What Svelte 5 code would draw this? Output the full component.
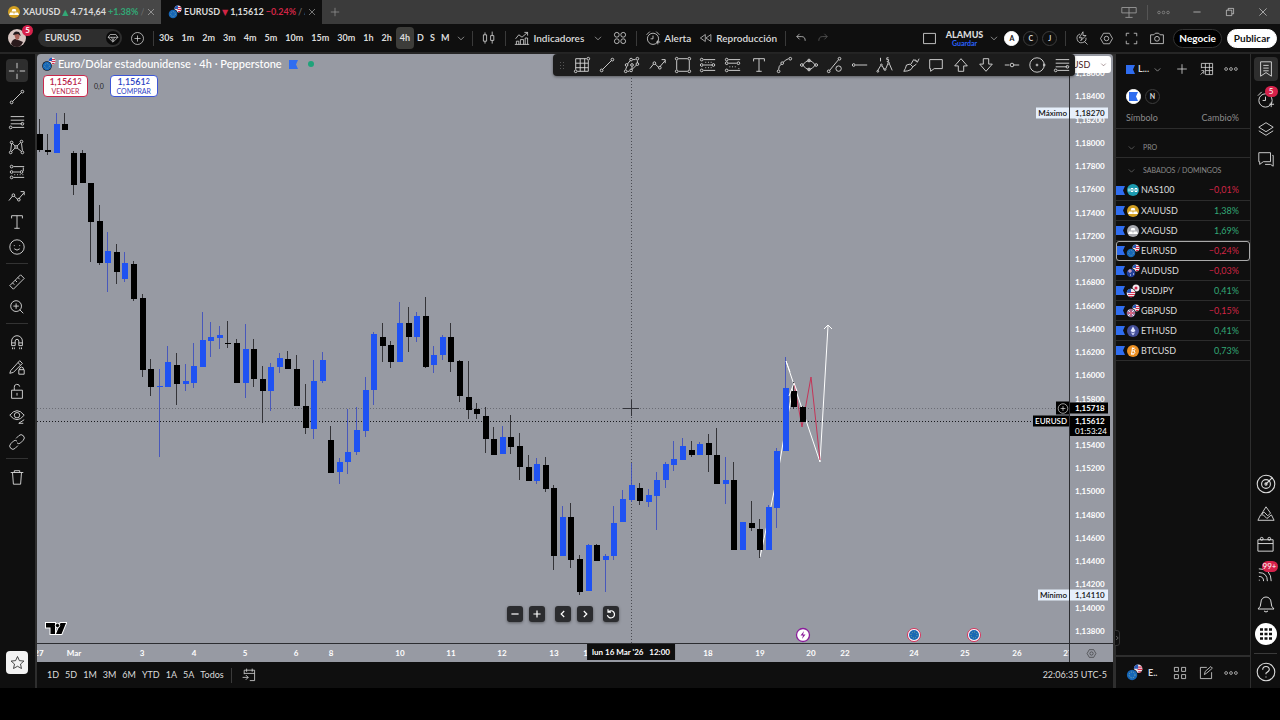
<script lang="ts">
  type Candle = [string, number, number, number, number];

  // small helpers for the stroke icons (20x20 grid)
  const ring = (x: number, y: number, r = 1.5) =>
    `M${x - r} ${y}a${r} ${r} 0 1 0 ${r * 2} 0a${r} ${r} 0 1 0 ${-r * 2} 0`;
  const box = (x: number, y: number, w: number, h: number) => `M${x} ${y}h${w}v${h}h${-w}z`;

  const icons: Record<string, string> = {
    cross: "M10 1v6M10 13v6M1 10h6M13 10h6M10 10h.5",
    line: ring(4, 16) + ring(16, 4) + "M5 15L15 5",
    fib: "M3 4h15M3 8h15M3 12h13M5 16h13" + ring(16, 12) + ring(3, 16),
    pattern: ring(4, 5) + ring(15, 4) + ring(9, 10) + ring(3, 16) + ring(16, 16) + "M4 6L3 14M5 6l3 3M14 5l-4 4M15 6l1 8M4 15l4-4M15 15l-5-4",
    forecast: ring(4, 4) + ring(4, 10) + ring(15, 10) + ring(4, 16) + "M6 4h12M6 10h7M6 16h12M17 5v4M7 13h1M10 13h1M13 13h1M16 13h1",
    wave: "M1 14l4-5M7 9l4 4M12 12l6-7M14 4h4v4" + ring(6, 8) + ring(12, 13),
    text: "M4 6V3h12v3M10 3v14M7 17h6",
    smile: ring(10, 10, 8) + "M7 12q3 3 6 0M7 8v1M13 8v1",
    ruler: "M2 14L14 2l4 4L6 18zM5 11l2 2M8 8l2 2M11 5l2 2",
    zoom: ring(9, 9, 6) + "M13 13l4 4M6 9h6M9 6v6",
    magnet: "M4 14V9a6 6 0 0 1 12 0v5h-4V9a2 2 0 0 0-4 0v5zM4 11h4M12 11h4M5 16v2M7 16v2M13 16v2M15 16v2",
    penlock: "M3 14L13 3l3 3L6 16l-4 1zM11 5l3 3" + box(12, 13, 6, 5) + "M13 13v-2q2-2 4 0v2",
    lock: box(4, 8, 12, 9) + "M7 8V5a3 3 0 0 1 6-1M10 11v3",
    eye: "M2 8q8-10 16 0q-8 10-16 0" + ring(10, 8, 3) + "M12 17l6-4M12 17h5",
    link: "M9 6l3-3a3 3 0 0 1 5 5l-3 3a3 3 0 0 1-4 0M11 14l-3 3a3 3 0 0 1-5-5l3-3a3 3 0 0 1 4 0",
    trash: "M3 5h14M7 5V3h6v2M5 5l1 13h8l1-13",
    star: "M10 2l2.5 5.5 6 .6-4.500 4 1.300 5.900L10 15l-5.300 3 1.300-5.900-4.500-4 6-.6z",
    grid: "M3 3h12M3 8h14M3 13h14M5 17h12M3 3v12M8 3v14M13 3v14M17 5v12" + ring(17, 3) + ring(3, 17),
    brush: ring(3, 17) + ring(4, 10) + ring(9, 4) + ring(16, 3) + ring(16, 9) + ring(9, 16) + ring(10, 10) + "M4 12l-1 3M5 9l3-4M11 4h3M16 5v3M15 10l-5 5M7 17H5M10 12v3",
    rect: "M5 3h10M5 17h10M3 5v10M17 5v10" + ring(3, 3) + ring(17, 3) + ring(3, 17) + ring(17, 17),
    longPos: "M5 4h13M5 10h10M5 16h13M7 7h1M10 7h1M13 7h1M7 13h1M10 13h1M13 13h1" + ring(3, 4) + ring(3, 10) + ring(16, 10) + ring(3, 16),
    shortPos: "M5 4h13M5 8h9M5 16h13M6 12h1M9 12h1M12 12h1M16 14h1" + ring(3, 4) + ring(3, 8) + ring(16, 8) + ring(3, 16),
    curve: ring(4, 17) + ring(8, 8) + ring(17, 3) + "M4 15q0-4 3-6M9 7q3-3 6-4",
    ellipse: "M3 10q7-10 14 0q-7 10-14 0" + ring(2, 10) + ring(18, 10) + ring(10, 5) + ring(10, 15),
    lineShape: ring(3, 17) + ring(15, 3) + "M4 16L14 4" + ring(14, 14, 3),
    ray: ring(3, 10) + "M5 10h13",
    elliott: "M2 16l3-5M7 11l2 4M11 14l2-5M15 9l3 7M5 2v4M14 2h-2v2h2v2h-2" + ring(2, 17, 1) + ring(6, 10, 1) + ring(10, 15, 1) + ring(14, 8, 1),
    paint: "M2 17q5 0 8-2l2-3-3-3-4 1q-1 4-3 7M10 9l3-5 3 2M12 12l4-3M15 4l2 3 2-4",
    note: "M3 4h14v10H8l-4 3v-3H3z",
    up: "M10 3l7 8h-4v6H7v-6H3z",
    down: "M10 17l7-8h-4V3H7v6H3z",
    hline: "M2 10h5M12 10h6" + ring(10, 10, 2),
    circle: ring(10, 10, 8) + ring(10, 10, 1) + ring(18, 10, 1),
    plus: "M10 4v12M4 10h12",
    circlePlus: ring(10, 10, 8) + "M10 6v8M6 10h8",
    gem: "M6 5h8l3 4-7 7-7-7zM3 9h14M8 9l2 6 2-6",
    bars: "M5 3v3M5 14v3M14 2v5M14 13v4" + box(3, 6, 4, 8) + box(12, 7, 4, 6),
    indicators: "M2 11l4-5 4 3 7-6M13 3h4v4M3 18v-4h3v4M8 18v-6h4v6M14 18v-8h3v8M1 18h18",
    layouts: ring(6, 6, 3) + ring(14, 6, 3) + ring(6, 14, 3) + ring(14, 14, 3),
    alarm: ring(10, 11, 7) + "M10 7v4h-3M2 6l4-4M18 6l-4-4M14 15h5M16 13v5",
    rewind: "M9 5v10l-7-5zM17 5v10l-7-5z",
    undo: "M8 4L4 8l4 4M4 8h7q5 0 5 6",
    redo: "M12 4l4 4-4 4M16 8H9q-5 0-5 6",
    square: box(3, 4, 14, 12),
    flash: "M16 9a6 6 0 1 1-8-5M14 14l4 4M12 1l-5 8h4l-2 4 7-7h-4z",
    hexagon: "M6 3h8l4 7-4 7H6l-4-7z" + ring(10, 10, 3),
    fullscreen: "M3 7V3h4M13 3h4v4M17 13v4h-4M7 17H3v-4",
    camera: "M2 6h4l2-2h4l2 2h4v11H2z" + ring(10, 11, 3),
    table: "M3 3h14v14H8M3 3v6M3 8h14M8 3v14M13 3v14M8 12h9M2 17l4-4M3 12h3v4",
    dots: ring(3, 10, 2) + ring(10, 10, 2) + ring(17, 10, 2),
    list: "M4 2h12v16l-6-4-6 4zM7 6h6M7 9h6M7 12h6",
    layers: "M10 3l8 5-8 5-8-5zM2 12l8 5 8-5",
    chat: "M2 3h13v10H7l-4 3v-3H2zM17 6h1v12l-3-2H9",
    radar: ring(10, 10, 8) + ring(10, 10, 4) + ring(10, 10, 1) + "M10 10l6-6",
    pyramid: "M10 2l5 7-3 3-4-4-3 2zM4 11l-3 6h18l-3-6-5 4-4-4z",
    calendar: "M2 5h16v12H2zM2 9h16" + ring(6, 4) + ring(14, 4),
    stream: "M3 16h1M3 12q5 0 5 5M3 8q9 0 9 9M3 4q13 0 13 13",
    bell: "M2 15q3-2 3-7a5 5 0 0 1 10 0q0 5 3 7zM8 17q2 2 4 0",
    help: ring(10, 10, 8) + "M7 8q0-3 3-3t3 3q0 1-3 3v1M10 14v1",
    four: box(3, 3, 5, 5) + box(12, 3, 5, 5) + box(3, 12, 5, 5) + box(12, 12, 5, 5),
    edit: "M11 3H3v14h14V9M8 12l1-4 7-6 2 2-7 6z",
    goto: "M4 9V4h13v13h-6M4 8h13M7 2v4M14 2v4M2 13h7M6 10l3 3-3 3",
    chevron: "M5 8l5 5 5-5",
    close: "M4 4l12 12M16 4L4 16",
    minus: "M4 10h12",
    restore: box(4, 7, 9, 9) + "M7 7V4h9v9h-3",
    monitor: "M2 5h16v6H2zM10 5v11M6 16h8",
    left: "M12 5l-5 5 5 5",
    right: "M8 5l5 5-5 5",
    reset: "M5 7a6 6 0 1 1-1 5M5 2v5h5",
  };

  const intervals = ["30s", "1m", "2m", "3m", "4m", "5m", "10m", "15m", "30m", "1h", "2h", "4h", "D", "S", "M"];
  const ranges = ["1D", "5D", "1M", "3M", "6M", "YTD", "1A", "5A", "Todos"];
  const tools = [
    ["cross", "line", "fib", "pattern", "forecast", "wave", "text", "smile"],
    ["ruler", "zoom"],
    ["magnet", "penlock", "lock", "eye", "link"],
    ["trash"],
  ];
  const favorites = [
    "grid", "line", "brush", "wave", "rect", "longPos", "shortPos", "text", "curve", "ellipse",
    "lineShape", "ray", "elliott", "paint", "note", "up", "down", "hline", "circle", "fib",
  ];

  const symbols = [
    { name: "NAS100", change: "−0,01%", kind: "nas" },
    { name: "XAUUSD", change: "1,38%", kind: "gold" },
    { name: "XAGUSD", change: "1,69%", kind: "silver" },
    { name: "EURUSD", change: "−0,24%", kind: "eur" },
    { name: "AUDUSD", change: "−0,03%", kind: "aud" },
    { name: "USDJPY", change: "0,41%", kind: "jpy" },
    { name: "GBPUSD", change: "−0,15%", kind: "gbp" },
    { name: "ETHUSD", change: "0,41%", kind: "eth" },
    { name: "BTCUSD", change: "0,73%", kind: "btc" },
  ];

  let interval = $state("4h");
  let selected = $state("EURUSD");

  // plot coordinate space
  const view = { x: 37, y: 54, w: 1032, h: 589 };
  const left = (x: number) => `${((x - view.x) / view.w) * 100}%`;
  const priceY = (p: number) => 96.4 + (1.184 - p) * 11620;
  const top = (p: number) => `${((priceY(p) - view.y) / view.h) * 100}%`;
  const fmt = (p: number) => p.toFixed(5).replace(".", ",");

  const prices = Array.from({ length: 25 }, (_, i) => 1.186 - i * 0.002).filter(
    (p) => Math.abs(p - 1.156) > 0.0001
  );

  const days: [string, number][] = [
    ["27", 39], ["Mar", 74], ["3", 142], ["4", 194], ["5", 245], ["6", 296], ["8", 331],
    ["10", 400], ["11", 451], ["12", 502], ["13", 554], ["15", 588], ["18", 708], ["19", 760],
    ["20", 811], ["22", 845], ["24", 914], ["25", 965], ["26", 1017], ["27", 1068],
  ];

  // direction, high, body top, body bottom, low
  const candles: Candle[] = [
    ["d", 119, 134, 150, 152], ["d", 134, 150, 152, 155], ["u", 113, 124, 153, 153], ["d", 113, 124, 130, 130],
    ["d", 151, 153, 185, 195], ["d", 150, 153, 183, 183], ["d", 183, 183, 222, 262], ["d", 205, 221, 263, 265],
    ["u", 232, 251, 263, 292], ["d", 244, 252, 272, 284], ["u", 252, 263, 279, 282], ["d", 261, 264, 299, 301],
    ["d", 294, 298, 370, 377], ["d", 359, 369, 387, 396], ["u", 369, 386, 387, 457], ["u", 346, 362, 387, 387],
    ["d", 353, 365, 384, 405], ["u", 364, 381, 384, 391], ["u", 343, 366, 383, 388], ["u", 312, 340, 367, 367],
    ["u", 322, 337, 341, 357], ["u", 326, 335, 338, 349], ["d", 321, 343, 344, 348], ["d", 339, 343, 383, 383],
    ["u", 324, 349, 383, 398], ["d", 339, 349, 379, 387], ["d", 366, 379, 391, 423], ["u", 363, 367, 391, 411],
    ["u", 353, 358, 367, 373], ["d", 351, 359, 369, 369], ["d", 355, 369, 406, 406], ["d", 384, 406, 428, 434],
    ["u", 360, 381, 429, 439], ["u", 352, 360, 381, 383], ["d", 426, 440, 473, 473], ["u", 458, 462, 472, 484],
    ["u", 409, 452, 462, 474], ["u", 407, 430, 452, 455], ["u", 377, 390, 431, 437], ["u", 332, 334, 390, 405],
    ["d", 323, 337, 346, 362], ["d", 341, 345, 362, 368], ["u", 302, 323, 362, 362], ["d", 307, 323, 337, 352],
    ["u", 312, 316, 337, 342], ["d", 297, 316, 367, 368], ["u", 346, 355, 365, 373], ["u", 335, 337, 355, 360],
    ["d", 323, 337, 362, 372], ["d", 360, 361, 396, 402], ["d", 361, 397, 410, 419], ["d", 403, 409, 414, 419],
    ["d", 407, 416, 439, 453], ["d", 427, 439, 455, 455], ["u", 426, 437, 454, 454], ["d", 415, 437, 447, 454],
    ["d", 433, 446, 467, 480], ["d", 455, 467, 481, 481], ["u", 458, 464, 481, 484], ["d", 457, 465, 489, 492],
    ["d", 485, 488, 556, 570], ["u", 506, 517, 556, 556], ["d", 503, 517, 560, 568], ["d", 555, 559, 592, 595],
    ["u", 544, 545, 591, 591], ["d", 544, 545, 561, 561], ["u", 554, 556, 560, 592], ["u", 506, 523, 556, 560],
    ["u", 490, 499, 522, 522], ["u", 463, 485, 500, 502], ["d", 483, 488, 501, 505], ["u", 489, 495, 502, 507],
    ["u", 472, 480, 496, 530], ["u", 462, 464, 480, 488], ["u", 441, 459, 465, 471], ["u", 438, 446, 460, 460],
    ["d", 441, 450, 455, 457], ["u", 442, 444, 455, 455], ["d", 434, 443, 455, 472], ["d", 428, 455, 484, 484],
    ["u", 457, 480, 484, 504], ["d", 462, 480, 550, 550], ["u", 522, 522, 550, 550], ["d", 501, 523, 528, 531],
    ["d", 519, 529, 550, 558], ["u", 505, 507, 550, 550], ["u", 448, 451, 508, 528], ["u", 357, 388, 451, 451],
    ["d", 382, 391, 407, 409], ["d", 406, 407, 422, 422],
  ];
  const candleX = (i: number) => Math.round(36.7 + i * 8.577);
</script>

{#snippet icon(name: string, size = 20)}
  <svg class="icon" width={size} height={size} viewBox="0 0 20 20" aria-hidden="true">
    <path d={icons[name]} />
  </svg>
{/snippet}

{#snippet flag()}
  <svg class="flag" width="9" height="9" viewBox="0 0 9 9" aria-hidden="true">
    <path d="M0 0h9L7 4.500 9 9H0z" fill="#2f6df0" />
  </svg>
{/snippet}

{#snippet coin(kind: string, size = 14)}
  <svg class="coin" width={size} height={size} viewBox="0 0 14 14" aria-hidden="true">
    {#if kind === "gold" || kind === "silver"}
      <circle cx="7" cy="7" r="6" fill={kind === "gold" ? "#d3a022" : "#a9aab0"} />
      <path d="M5.500 4h3l1 2.500h-5zM3 7.500h3.500l.5 2.500H2zM7.500 7.500H11l1 2.500H7z" fill="#fff" />
    {:else if kind === "nas"}
      <circle cx="7" cy="7" r="6" fill="#1b9bb0" />
      <path d="M3 5.500v3M5 5.500h2v3H5zM9 5.500h2v3H9z" fill="none" stroke="#fff" />
    {:else if kind === "eth"}
      <circle cx="7" cy="7" r="6" fill="#444f9a" />
      <path d="M7 2.500L9.500 7 7 8.500 4.500 7zM4.800 8.300L7 11.500l2.200-3.200L7 9.600z" fill="#e4e8ff" />
    {:else if kind === "btc"}
      <circle cx="7" cy="7" r="6" fill="#ec9023" />
      <path d="M5.500 10.500l1-7M6 4.500h2q2 1 0 2.400H6M8 7q2 1 0 2.800H5M8 3.500v1M7 10v1" fill="none" stroke="#fff" />
    {:else}
      <circle cx="10" cy="4" r="3.500" fill="#f1e9ee" />
      {#if kind === "jpy"}
        <circle cx="10" cy="4" r="1.500" fill="#d3264a" />
      {:else}
        <path d="M10 2.500h3M9.500 4.500h4M10 6.500h2.500" stroke="#d5304f" />
        <path d="M10 .5v3.500H6.500A3.500 3.500 0 0 1 10 .5z" fill="#2b5bb8" />
      {/if}
      <circle cx="5" cy="9" r="4.800" fill="#0f0f0f" />
      {#if kind === "eur"}
        <circle cx="5" cy="9" r="4.300" fill="#1666b8" />
        <circle cx="5" cy="9" r="2.400" fill="none" stroke="#8fb6a0" stroke-width=".6" stroke-dasharray="1 1" />
      {:else if kind === "aud"}
        <circle cx="5" cy="9" r="4.300" fill="#23409a" />
        <path d="M2 7h4M4 5v4" stroke="#f0b8c6" />
        <path d="M7 10h1M4 11h1" stroke="#fff" />
      {:else if kind === "jpy"}
        <circle cx="5" cy="9" r="4.300" fill="#f1e9ee" />
        <path d="M2 8.500h7M2 10.500h7M3 12.500h4" stroke="#d5304f" />
        <path d="M5 4.700v4H.7A4.300 4.300 0 0 1 5 4.700z" fill="#2b5bb8" />
      {:else}
        <circle cx="5" cy="9" r="4.300" fill="#8d86b0" />
        <path d="M2 6l6 6M8 6l-6 6" stroke="#f3dfe6" />
        <path d="M5 5v8M1 9h8" stroke="#e0405c" />
      {/if}
    {/if}
  </svg>
{/snippet}

<div class="app">
  <header class="tabs">
    <div class="tab">
      {@render coin("gold")}
      <span>XAUUSD</span><i class="up">▲</i><span>4.714,64</span><span class="up">+1.38%</span><span class="faint">/</span>
      <button aria-label="Cerrar XAUUSD">{@render icon("close", 10)}</button>
    </div>
    <div class="tab active">
      {@render coin("eur")}
      <span>EURUSD</span><i class="down">▼</i><span>1,15612</span><span class="down">−0.24%</span><span class="faint">/ A</span>
      <button aria-label="Cerrar EURUSD">{@render icon("close", 10)}</button>
    </div>
    <button class="new-tab" aria-label="Nueva pestaña">{@render icon("plus", 14)}</button>
    <div class="window">
      <button aria-label="Pantallas">{@render icon("monitor", 18)}</button>
      <hr />
      <button aria-label="Más">{@render icon("dots", 13)}</button>
      <button class="lit" aria-label="Minimizar">{@render icon("minus", 12)}</button>
      <button class="lit" aria-label="Restaurar">{@render icon("restore", 12)}</button>
      <button class="lit" aria-label="Cerrar">{@render icon("close", 12)}</button>
    </div>
  </header>

  <nav class="topbar">
    <button class="avatar" aria-label="Perfil">
      <svg width="18" height="18" viewBox="0 0 18 18" aria-hidden="true">
        <circle cx="9" cy="9" r="9" fill="#d8c6c2" />
        <path d="M3 15q1-5 5-5l7 3q-2 5-6 5-4 0-6-3z" fill="#2a1a1c" />
        <path d="M6 5q3-4 6 0l-1 5-3 1z" fill="#a9645a" />
        <path d="M5 6q1-5 6-3l2 4-3-2z" fill="#21191c" />
      </svg>
      <span class="badge">5</span>
    </button>
    <button class="search">EURUSD <span>{@render icon("gem", 14)}</span></button>
    <button aria-label="Comparar">{@render icon("circlePlus", 15)}</button>
    <hr />
    <div class="intervals">
      {#each intervals as item}
        <button
          class:short={item.length === 1}
          class:active={interval === item}
          onclick={() => (interval = item)}>{item}</button>
      {/each}
      <button class="short" aria-label="Más intervalos">{@render icon("chevron", 12)}</button>
    </div>
    <hr />
    <button aria-label="Velas">{@render icon("bars", 16)}</button>
    <hr />
    <button class="label">{@render icon("indicators", 16)}Indicadores</button>
    <button aria-label="Indicadores favoritos">{@render icon("chevron", 12)}</button>
    <button aria-label="Plantillas">{@render icon("layouts", 16)}</button>
    <hr />
    <button class="label">{@render icon("alarm", 16)}Alerta</button>
    <button class="label">{@render icon("rewind", 14)}Reproducción</button>
    <hr />
    <button aria-label="Deshacer">{@render icon("undo", 14)}</button>
    <button class="off" aria-label="Rehacer">{@render icon("redo", 14)}</button>
    <div class="spacer"></div>
    <button aria-label="Diseño">{@render icon("square", 17)}</button>
    <div class="layout">
      <button><b>ALAMUS</b><small>Guardar</small></button>
      <button aria-label="Gestionar diseños">{@render icon("chevron", 12)}</button>
    </div>
    <div class="letters">
      <button class="letter on">A</button>
      <button class="letter">C</button>
      <button class="letter">J</button>
    </div>
    <hr />
    <div class="actions">
      <button aria-label="Búsqueda rápida">{@render icon("flash", 15)}</button>
      <button aria-label="Configuración">{@render icon("hexagon", 15)}</button>
      <button aria-label="Pantalla completa">{@render icon("fullscreen", 15)}</button>
      <button aria-label="Captura">{@render icon("camera", 16)}</button>
    </div>
    <button class="pill">Negocie</button>
    <button class="pill white">Publicar</button>
  </nav>

  <main>
    <aside class="rail">
      {#each tools as group}
        <div class="group">
          {#each group as tool}
            <button class:active={tool === "cross"} aria-label={tool}>{@render icon(tool, 18)}</button>
          {/each}
        </div>
      {/each}
      <button class="star" aria-label="Favoritos">{@render icon("star", 15)}</button>
    </aside>

    <section class="center">
      <div class="chart">
        <div class="plot">
          <svg class="canvas" viewBox="{view.x} {view.y} {view.w} {view.h}" preserveAspectRatio="none" aria-hidden="true">
            <path class="guide" d="M37 408.500H1069" opacity="0.35" />
            <path class="guide" d="M631.500 54V643" opacity="0.6" />
            <path class="guide" d="M37 421.500H1069" />
            <g fill="none" stroke="#fff">
              <path d="M760 557Q777 480 781 455T794 383" />
              <path d="M786 361L820 462 828 326M824 329L828 325 832 329" />
              <path d="M794 383L802 427 811 377 820 460" stroke="#c43558" />
            </g>
            <g shape-rendering="crispEdges">
              {#each candles as [dir, high, open, close, low], i}
                <rect class="wick {dir}" x={candleX(i) + 2} y={high} width="1" height={low - high} />
                <rect class="body {dir}" x={candleX(i)} y={open} width="6" height={Math.max(close - open, 1)} />
              {/each}
            </g>
            <path d="M786 361L790 372M789 396L794 383 797 391" fill="none" stroke="#fff" />
            <path d="M631.500 400V416M623 408.500H639" stroke="#33343a" />
          </svg>

          <div class="legend">
            {@render coin("eur")}
            <h1>Euro/Dólar estadounidense · 4h · Pepperstone</h1>
            {@render flag()}
            <i class="status"></i>
          </div>
          <div class="orders">
            <button class="sell"><b>1,1561<sup>2</sup></b>VENDER</button>
            <span>0,0</span>
            <button class="buy"><b>1,1561<sup>2</sup></b>COMPRAR</button>
          </div>

          <span class="tag" style:top={top(1.1826)}>Máximo</span>
          <span class="tag" style:top={top(1.1411)}>Mínimo</span>
          <span class="tag dark" style:top={top(1.15605)}>EURUSD</span>
          <button class="add" aria-label="Añadir alerta" style:top={top(1.15715)}>{@render icon("circlePlus", 12)}</button>

          <svg class="logo" width="23" height="15" viewBox="0 0 23 15" aria-label="TradingView">
            <path d="M2 2h9v11H6.500V6.500H2z M19 2h3l-4.500 11h-5.500L16.500 2z" fill="#000" stroke="#fff" stroke-width="2" paint-order="stroke" />
            <circle cx="13.500" cy="4.500" r="2.200" fill="#000" stroke="#fff" />
          </svg>

          <div class="controls">
            <button aria-label="Alejar">{@render icon("minus", 12)}</button>
            <button aria-label="Acercar">{@render icon("plus", 12)}</button>
            <button class="apart" aria-label="Izquierda">{@render icon("left", 12)}</button>
            <button aria-label="Derecha">{@render icon("right", 12)}</button>
            <button class="apart" aria-label="Restablecer">{@render icon("reset", 12)}</button>
          </div>

          {#each [["bolt", 803], ["eu", 914], ["eu", 974]] as [kind, x]}
            <svg class="event" style:left={left(Number(x))} width="16" height="16" viewBox="0 0 16 16" aria-hidden="true">
              {#if kind === "bolt"}
                <circle cx="8" cy="8" r="6.500" fill="#fff" stroke="#8b1d9b" stroke-width="1.300" />
                <path d="M9 4L5.500 8.500H8L7 12l3.500-4.500H8z" fill="#8b1d9b" />
              {:else}
                <circle cx="8" cy="8" r="6.500" fill="#fff" stroke="#d5305a" />
                <circle cx="8" cy="8" r="5" fill="#1a68b5" />
                <circle cx="8" cy="8" r="3" fill="none" stroke="#7fae90" stroke-dasharray="1 1.300" />
              {/if}
            </svg>
          {/each}
        </div>

        <div class="price-axis">
          {#each prices as p}
            <span style:top={top(p)}>{fmt(p)}</span>
          {/each}
          <span class="mark" style:top={top(1.1826)}>1,18270</span>
          <span class="mark" style:top={top(1.1411)}>1,14110</span>
          <span class="mark dark" style:top={top(1.15715)}>1,15718</span>
          <span class="mark dark last" style:top={top(1.15565)}>1,15612<small>01:53:24</small></span>
          <label class="currency">
            <select aria-label="Moneda"><option>USD</option></select>
            {@render icon("chevron", 9)}
          </label>
        </div>

        <div class="time-axis">
          {#each days as [day, x]}
            <span style:left={left(x)}>{day}</span>
          {/each}
          <span class="cursor" style:left={left(631)}>lun 16 Mar '26 &nbsp; 12:00</span>
        </div>
        <button class="axis-settings" aria-label="Ajustes de escala">{@render icon("hexagon", 11)}</button>
      </div>

      <div class="favorites">
        <span class="grip"></span>
        {#each favorites as tool}
          <button aria-label={tool}>{@render icon(tool, 18)}</button>
        {/each}
      </div>

      <footer class="ranges">
        {#each ranges as range}
          <button>{range}</button>
        {/each}
        <hr />
        <button aria-label="Ir a la fecha">{@render icon("goto", 16)}</button>
        <time>22:06:35 UTC-5</time>
      </footer>

      <button class="collapse" aria-label="Ocultar panel">{@render icon("right", 8)}</button>
    </section>

    <aside class="watchlist">
      <div class="list-head">
        <button class="list-name">{@render flag()} <b>L...</b> {@render icon("chevron", 11)}</button>
        <button aria-label="Añadir símbolo">{@render icon("plus", 16)}</button>
        <button aria-label="Vista de tabla">{@render icon("table", 16)}</button>
        <button aria-label="Más">{@render icon("dots", 14)}</button>
      </div>
      <div class="list-tabs">
        <button class="letter on" aria-label="Lista azul">{@render flag()}</button>
        <button class="letter">N</button>
      </div>
      <table>
        <thead>
          <tr><th>Símbolo</th><th>Cambio%</th></tr>
        </thead>
        <tbody>
          <tr class="section first"><td colspan="2">{@render icon("chevron", 11)}PRO</td></tr>
          <tr class="section"><td colspan="2">{@render icon("chevron", 11)}SABADOS / DOMINGOS</td></tr>
          {#each symbols as s}
            <tr class:selected={selected === s.name} onclick={() => (selected = s.name)}>
              <td><div class="symbol">{@render flag()}{@render coin(s.kind)}{s.name}</div></td>
              <td class={s.change.startsWith("−") ? "down" : "up"}>{s.change}</td>
            </tr>
          {/each}
        </tbody>
      </table>
      <div class="list-foot">
        <span class="list-name">{@render coin("eur", 17)} <b>E..</b></span>
        <button aria-label="Cuadrícula">{@render icon("four", 16)}</button>
        <button aria-label="Nota">{@render icon("edit", 16)}</button>
        <button aria-label="Más">{@render icon("dots", 14)}</button>
      </div>
    </aside>

    <aside class="side">
      <button class="active" aria-label="Lista de seguimiento">{@render icon("list", 18)}</button>
      <button aria-label="Alertas">{@render icon("alarm", 19)}<span class="badge">5</span></button>
      <button aria-label="Árbol de objetos">{@render icon("layers", 18)}</button>
      <button aria-label="Chats">{@render icon("chat", 18)}</button>
      <div class="spacer"></div>
      <button aria-label="Radar">{@render icon("radar", 22)}</button>
      <button aria-label="Pine">{@render icon("pyramid", 18)}</button>
      <button aria-label="Calendario">{@render icon("calendar", 19)}</button>
      <button aria-label="Noticias">{@render icon("stream", 19)}<span class="badge">99+</span></button>
      <button aria-label="Notificaciones">{@render icon("bell", 20)}</button>
      <button class="apps" aria-label="Productos">
        <svg width="22" height="22" viewBox="0 0 22 22" aria-hidden="true">
          <circle cx="11" cy="11" r="11" fill="#fff" />
          <path d="M5 6.500h12M5 11h12M5 15.500h12" stroke="#111" stroke-width="2.500" stroke-dasharray="3 1.500" />
        </svg>
      </button>
      <hr />
      <button aria-label="Ayuda">{@render icon("help", 22)}</button>
    </aside>
  </main>
</div>

<style>
  :global(body) {
    background: #000;
  }

  .app {
    --bg: #0f0f0f;
    --line: #2e2e2e;
    --text: #dbdbdb;
    --green: #32a876;
    --red: #d02545;
    display: flex;
    flex-direction: column;
    height: 100vh;
    min-height: 600px;
    padding-bottom: 32px;
    box-sizing: border-box;
    background: #000;
    color: var(--text);
    font-family: "Trebuchet MS", Lato, "Open Sans", sans-serif;
    font-size: 9px;
    line-height: 12px;
    overflow: hidden;
  }

  button {
    position: relative;
    display: flex;
    align-items: center;
    justify-content: center;
    flex: none;
    padding: 0;
    border: 0;
    background: none;
    color: inherit;
    font: inherit;
    cursor: pointer;
  }

  svg {
    display: block;
    flex: none;
  }

  .icon path {
    fill: none;
    stroke: currentColor;
    stroke-width: 1;
  }

  hr {
    flex: none;
    width: 1px;
    height: 15px;
    margin: 0;
    border: 0;
    background: #3a3a3a;
  }

  .spacer {
    flex: 1;
  }

  .up {
    color: var(--green);
  }

  .down {
    color: var(--red);
  }

  .badge {
    position: absolute;
    top: -4px;
    right: -7px;
    min-width: 11px;
    border-radius: 6px;
    background: #d6224b;
    color: #fff;
    font-size: 8px;
    line-height: 11px;
    text-align: center;
  }

  /* window tabs */
  .tabs {
    display: flex;
    flex: none;
    height: 24px;
    background: #3b3b3b;
  }

  .tab {
    display: flex;
    align-items: center;
    gap: 2px;
    width: 161px;
    padding: 0 5px 0 7px;
    box-sizing: border-box;
    background: #474747;
    font-weight: 700;
    white-space: nowrap;
  }

  .tab i {
    font: 8px "DejaVu Sans", sans-serif;
  }

  .tab button {
    margin-left: auto;
  }

  .tab.active {
    background: var(--bg);
  }

  .faint {
    min-width: 0;
    color: #666;
    overflow: hidden;
  }

  .new-tab {
    width: 26px;
    color: #999;
  }

  .window {
    display: flex;
    align-items: center;
    gap: 21px;
    margin-left: auto;
    padding-right: 11px;
    color: #999;
  }

  .window hr {
    margin: 0 -12px;
    background: #555;
  }

  .window .lit {
    color: #eee;
  }

  /* main toolbar */
  .topbar {
    display: flex;
    align-items: center;
    flex: none;
    gap: 8px;
    height: 28px;
    padding: 0 3px 0 8px;
    background: var(--bg);
    border-bottom: 2px solid #262626;
    font-weight: 700;
    white-space: nowrap;
  }

  .search {
    justify-content: space-between;
    width: 84px;
    height: 18px;
    margin-left: 4px;
    padding: 0 2px 0 7px;
    border-radius: 9px;
    background: #2e2e2e;
  }

  .search span {
    border-radius: 7px;
    background: #0a0a0a;
  }

  .intervals {
    display: flex;
    align-items: center;
    margin: 0 -6px 0 -7px;
  }

  .intervals button {
    height: 22px;
    padding: 0 4px;
    border-radius: 4px;
  }

  .intervals .short {
    padding: 0 3px;
  }

  .intervals .active {
    background: #3d3d3a;
  }

  .label {
    gap: 3px;
    font-size: 10px;
    font-weight: 600;
  }

  .off {
    color: #666;
  }

  .layout {
    display: flex;
    gap: 5px;
    margin-right: -4px;
  }

  .layout button {
    flex-direction: column;
    line-height: 9px;
  }

  .layout small {
    color: #2962ff;
    font-size: 7px;
    line-height: 8px;
  }

  .letters {
    display: flex;
    gap: 4px;
  }

  .actions {
    display: flex;
    gap: 10px;
  }

  .letter {
    width: 15px;
    height: 15px;
    box-sizing: border-box;
    border: 1px solid #3d3d3d;
    border-radius: 50%;
    font-size: 7px;
    font-weight: 700;
  }

  .letter.on {
    border-color: #fff;
    background: #fff;
    color: #111;
  }

  .pill {
    height: 19px;
    padding: 0 5px;
    border: 1px solid #333;
    border-radius: 10px;
    background: #000;
    color: #fff;
    font-size: 10px;
    font-weight: 700;
  }

  .pill.white {
    margin-left: -3px;
    padding: 0 6px;
    border-color: #fff;
    background: #fff;
    color: #111;
  }

  main {
    display: grid;
    grid-template-columns: 35px minmax(0, 1fr) 134px 30px;
    flex: 1;
    min-height: 0;
    background: var(--line);
  }

  /* drawing tools */
  .rail {
    display: flex;
    flex-direction: column;
    align-items: center;
    padding: 5px 1px 14px 0;
    background: var(--bg);
  }

  .group + .group {
    margin-top: 4px;
    padding-top: 5px;
    border-top: 1px solid #333;
  }

  .rail button {
    width: 22px;
    height: 25px;
  }

  .rail .active {
    height: 23px;
    margin-bottom: 2px;
  }

  .rail .active,
  .side .active {
    border-radius: 4px;
    background: #2e2e2e;
  }

  .rail .star {
    height: 23px;
    margin-top: auto;
    border-radius: 4px;
    background: #f2f2f2;
    color: #111;
  }

  /* chart */
  .center {
    position: relative;
    display: flex;
    flex-direction: column;
    min-width: 0;
    padding: 0 3px 0 2px;
  }

  .chart {
    display: grid;
    grid-template: minmax(0, 1fr) 19px / minmax(0, 1fr) 44px;
    flex: 1;
    min-height: 0;
    border-radius: 4px 4px 0 0;
    background: #979aa3;
    overflow: hidden;
  }

  .plot,
  .price-axis,
  .time-axis {
    position: relative;
    min-width: 0;
    min-height: 0;
  }

  .canvas {
    position: absolute;
    width: 100%;
    height: 100%;
  }

  .guide {
    fill: none;
    stroke: #17181c;
    stroke-dasharray: 1 2;
  }

  .wick {
    fill: #222226;
    opacity: 0.85;
  }

  .wick.u {
    fill: #3a4cc0;
  }

  .body {
    fill: #000;
  }

  .body.u {
    fill: #1f52f2;
  }

  .legend {
    position: relative;
    display: flex;
    align-items: center;
    gap: 2px;
    padding: 2px 0 0 5px;
    color: #fff;
  }

  h1 {
    margin: 0 5px 0 0;
    font-size: 11px;
    font-weight: 500;
    line-height: 16px;
  }

  .status {
    width: 6px;
    height: 6px;
    margin-left: 8px;
    border-radius: 50%;
    background: #1fa37a;
  }

  .orders {
    position: relative;
    display: flex;
    align-items: center;
    gap: 6px;
    padding: 3px 0 0 6px;
    color: #222;
    font-size: 7px;
  }

  .orders button {
    flex-direction: column;
    width: 45px;
    height: 22px;
    box-sizing: border-box;
    border: 1px solid #c9284c;
    border-radius: 4px;
    background: #fff;
    color: #b8234a;
    line-height: 9px;
  }

  .orders .buy {
    width: 48px;
    border-color: #3d56d6;
    color: #2d43c4;
  }

  .orders b {
    font-size: 9px;
    font-weight: 600;
    line-height: 10px;
  }

  sup {
    font-size: 7px;
    line-height: 0;
    vertical-align: 1px;
  }

  .tag {
    position: absolute;
    right: 0;
    padding: 0 2px;
    background: #e6effb;
    color: #111;
    font-size: 8px;
    font-weight: 600;
    line-height: 11px;
    transform: translateY(-50%);
  }

  .tag.dark,
  .mark.dark {
    background: #000;
    color: #fff;
  }

  .add {
    position: absolute;
    right: 0;
    width: 13px;
    height: 13px;
    background: #000;
    color: #fff;
    transform: translateY(-50%);
  }

  .logo {
    position: absolute;
    bottom: 7px;
    left: 7px;
  }

  .controls {
    position: absolute;
    bottom: 21px;
    left: 45.500%;
    display: flex;
    gap: 6px;
  }

  .controls button {
    width: 16px;
    height: 16px;
    border-radius: 3px;
    background: #2b2c2f;
    box-shadow: 0 1px 3px #0006;
    color: #fff;
  }

  .controls .icon path {
    stroke-width: 2;
  }

  .controls .apart {
    margin-left: 4px;
  }

  .event {
    position: absolute;
    bottom: 0;
    transform: translateX(-50%);
  }

  .price-axis {
    border-left: 1px solid #2c2d31;
    overflow: hidden;
  }

  .price-axis span {
    position: absolute;
    left: 5px;
    color: #fff;
    font-size: 8px;
    font-weight: 700;
    line-height: 11px;
    transform: translateY(-50%);
  }

  .price-axis .mark {
    left: 0;
    padding: 0 3px 0 5px;
    background: #e6effb;
    color: #111;
    font-weight: 600;
  }

  .price-axis .mark.dark {
    background: #000;
    color: #fff;
    font-weight: 700;
  }

  .price-axis .last {
    line-height: 10px;
  }

  .mark small {
    display: block;
    font-size: 8px;
    font-weight: 400;
  }

  .currency {
    position: absolute;
    top: 2px;
    right: 2px;
    left: 0;
    display: flex;
    align-items: center;
    padding-right: 3px;
    border-radius: 3px;
    background: #fff;
    color: #4a2226;
  }

  select {
    flex: 1;
    min-width: 0;
    height: 17px;
    padding: 0 0 0 2px;
    border: 0;
    appearance: none;
    background: none;
    color: inherit;
    font: inherit;
  }

  .time-axis {
    border-top: 1px solid #2c2d31;
    overflow: hidden;
  }

  .time-axis span {
    position: absolute;
    color: #fff;
    font-size: 8px;
    font-weight: 700;
    line-height: 18px;
    white-space: nowrap;
    transform: translateX(-50%);
  }

  .time-axis .cursor {
    padding: 0 5px;
    background: var(--bg);
    line-height: 16px;
  }

  .axis-settings {
    border-top: 1px solid #2c2d31;
    border-left: 1px solid #2c2d31;
    color: #222;
  }

  .favorites {
    position: absolute;
    top: 0;
    right: 41px;
    display: flex;
    align-items: center;
    width: 520px;
    height: 22px;
    padding-left: 2px;
    border-radius: 4px;
    background: #1c1c1c;
    box-shadow: 0 1px 3px #0006;
  }

  .favorites button {
    flex: 1;
    height: 22px;
  }

  .grip {
    width: 6px;
    height: 9px;
    margin: 0 4px;
    background: radial-gradient(#555 30%, transparent 40%) 0 0 / 3px 3px;
  }

  .ranges {
    display: flex;
    align-items: center;
    flex: none;
    gap: 6px;
    height: 26px;
    padding: 0 6px 0 10px;
    background: var(--bg);
  }

  .ranges hr {
    margin: 0 3px 0 1px;
  }

  .ranges time {
    margin-left: auto;
  }

  .collapse {
    position: absolute;
    right: -4px;
    bottom: 42px;
    z-index: 1;
    width: 6px;
    height: 16px;
    border: 1px solid #333;
    border-radius: 0 3px 3px 0;
    background: var(--bg);
  }

  /* watchlist */
  .watchlist {
    display: flex;
    flex-direction: column;
    min-width: 0;
    background: var(--bg);
  }

  .list-head,
  .list-foot {
    display: flex;
    align-items: center;
    gap: 10px;
    height: 30px;
    padding: 0 12px 0 10px;
  }

  .list-head {
    gap: 9px;
  }

  .list-name {
    display: flex;
    align-items: center;
    gap: 5px;
    margin-right: auto;
  }

  .list-head .list-name {
    gap: 3px;
  }

  .list-tabs {
    display: flex;
    align-items: center;
    gap: 4px;
    height: 24px;
    padding-left: 10px;
  }

  table {
    width: 100%;
    border-collapse: collapse;
  }

  tr {
    height: 20px;
    border-bottom: 1px solid #2c2c2c;
  }

  th,
  td {
    height: 19px;
    padding: 0;
    text-align: left;
  }

  th {
    color: #8c8c8c;
    font-weight: 400;
  }

  th:first-child {
    padding-left: 10px;
  }

  th:last-child,
  td:last-child:not([colspan]) {
    padding-right: 11px;
    text-align: right;
  }

  .section td {
    height: 21px;
    padding: 2px 0 0 10px;
    color: #8c8c8c;
    font-size: 7px;
  }

  .section:not(.first) {
    border-bottom: 0;
  }

  .section.first td {
    height: 19px;
    padding-top: 9px;
  }

  .section .icon {
    display: inline-block;
    margin-right: 6px;
    vertical-align: middle;
  }

  .symbol {
    display: flex;
    align-items: center;
    gap: 1px;
  }

  .selected {
    border-radius: 3px;
    outline: 1px solid #aaa;
    outline-offset: -1px;
  }

  .list-foot {
    height: 31px;
    margin-top: auto;
    border-top: 2px solid var(--line);
  }

  /* right rail */
  .side {
    display: flex;
    flex-direction: column;
    align-items: center;
    padding-bottom: 1px;
    border-left: 1px solid var(--line);
    background: var(--bg);
  }

  .side button {
    width: 24px;
    height: 30px;
  }

  .side .active {
    height: 24px;
    margin: 3px 0;
  }

  .side .badge {
    top: 2px;
    right: 0;
    padding: 0 1px;
  }

  .side hr {
    width: 23px;
    height: 1px;
    margin: 4px 0 3px;
  }
</style>
